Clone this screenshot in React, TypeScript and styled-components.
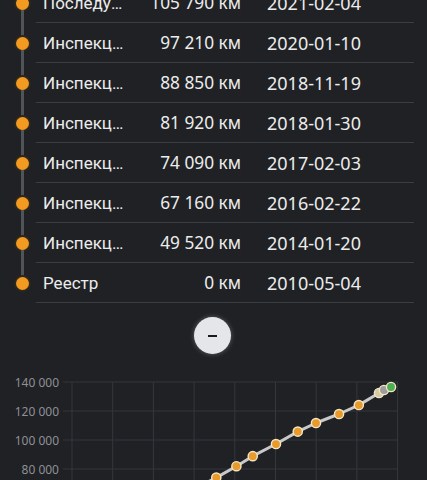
import React from 'react';
import styled, { createGlobalStyle } from 'styled-components';

const Global = createGlobalStyle`
  html, body { margin: 0; padding: 0; background: #1f2125; }
  body { font-family: Roboto, "Noto Sans", sans-serif; color: #ececec; overflow: hidden; }
`;

const Page = styled.div`
  width: 427px;
  height: 480px;
  overflow: hidden;
  background: #1f2125;
`;

const List = styled.ul`
  list-style: none;
  margin: -17px 0 0;
  padding: 0;
`;

const Row = styled.li`
  display: flex;
  height: 40px;
`;

const Rail = styled.div`
  width: 36px;
  padding-left: 9px;
  box-sizing: border-box;
  display: flex;
  flex-direction: column;
  align-items: center;
  flex: none;
`;

const Segment = styled.div<{ $hidden?: boolean }>`
  flex: 1;
  width: 3px;
  background: ${(p) => (p.$hidden ? 'transparent' : '#505358')};
`;

const Dot = styled.div`
  width: 13px;
  height: 13px;
  border-radius: 50%;
  background: #f39b20;
  box-shadow: 0 0 0 2px #2c2820;
  flex: none;
`;

const Content = styled.div`
  flex: 1;
  margin-right: 13px;
  padding-left: 7px;
  border-bottom: 1px solid #3a3d42;
  display: grid;
  grid-template-columns: 86px 112px auto;
  align-items: center;
`;

const Name = styled.span`
  font-family: Roboto, sans-serif;
  font-size: 17px;
  white-space: nowrap;
  overflow: hidden;
  text-overflow: ellipsis;
`;

const Mileage = styled.span`
  font-family: "Noto Sans", sans-serif;
  font-size: 17.3px;
  text-align: right;
  white-space: nowrap;
`;

const DateCell = styled.span`
  font-family: "Noto Sans", sans-serif;
  font-size: 18px;
  margin-left: 26px;
  white-space: nowrap;
`;

const ButtonRow = styled.div`
  display: flex;
  justify-content: center;
  padding: 14px 3px 0 0;
`;

const RoundButton = styled.button`
  width: 37px;
  height: 37px;
  border-radius: 50%;
  border: none;
  background: #e4e6ea;
  box-shadow: 0 0 5px rgba(255, 255, 255, 0.3);
  display: flex;
  align-items: center;
  justify-content: center;
  padding: 0;
  cursor: pointer;
`;

const Dash = styled.span`
  width: 9px;
  height: 2px;
  background: #1a1a1a;
`;

const ChartWrap = styled.div`
  margin-top: 7px;
`;

const rows = [
  { name: 'Последующая регистрация', km: '105 790 км', date: '2021-02-04' },
  { name: 'Инспекция', km: '97 210 км', date: '2020-01-10' },
  { name: 'Инспекция', km: '88 850 км', date: '2018-11-19' },
  { name: 'Инспекция', km: '81 920 км', date: '2018-01-30' },
  { name: 'Инспекция', km: '74 090 км', date: '2017-02-03' },
  { name: 'Инспекция', km: '67 160 км', date: '2016-02-22' },
  { name: 'Инспекция', km: '49 520 км', date: '2014-01-20' },
  { name: 'Реестр', km: '0 км', date: '2010-05-04' },
];

type Pt = { d: string; km: number; fill?: string };
const points: Pt[] = [
  { d: '2010-05-04', km: 0 },
  { d: '2014-01-20', km: 49520 },
  { d: '2016-02-22', km: 67160 },
  { d: '2017-02-03', km: 74090 },
  { d: '2018-01-30', km: 81920 },
  { d: '2018-11-19', km: 88850 },
  { d: '2020-01-10', km: 97210 },
  { d: '2021-02-04', km: 105790 },
  { d: '2021-12-28', km: 111700 },
  { d: '2023-02-15', km: 117900 },
  { d: '2024-02-05', km: 124100 },
  { d: '2025-02-01', km: 132400, fill: '#d6c9a6' },
  { d: '2025-05-01', km: 134500, fill: '#9c9c9c' },
  { d: '2025-09-05', km: 136550, fill: '#4caf50' },
];

const base = Date.UTC(2010, 0, 1);
const X = (d: string) => {
  const [y, m, dd] = d.split('-').map(Number);
  const yrs = (Date.UTC(y, m - 1, dd) - base) / (365.25 * 86400000);
  return 72 + yrs * 20.35;
};
const Y = (km: number) => 21 + ((140000 - km) * 29) / 20000;

const Chart = () => {
  const hLines = [0, 1, 2, 3, 4].map((i) => 21 + i * 29);
  const vLines = Array.from({ length: 9 }, (_, k) => 72 + k * 40.7);
  const labels = ['140 000', '120 000', '100 000', '80 000'];
  const path = points.map((p, i) => `${i ? 'L' : 'M'}${X(p.d).toFixed(1)},${Y(p.km).toFixed(1)}`).join(' ');
  return (
    <svg width={427} height={160} viewBox="0 0 427 160" style={{ display: 'block' }}>
      {hLines.map((y) => (
        <line key={'h' + y} x1={63} x2={398} y1={y} y2={y} stroke="#34373c" strokeWidth={1} />
      ))}
      {vLines.map((x) => (
        <line key={'v' + x} x1={x} x2={x} y1={21} y2={160} stroke="#34373c" strokeWidth={1} />
      ))}
      {labels.map((l, i) => (
        <text
          key={l}
          x={59}
          y={21 + i * 29}
          textAnchor="end"
          dominantBaseline="central"
          fill="#8e9095"
          fontSize={12}
          fontFamily='"Noto Sans", sans-serif'
        >
          {l}
        </text>
      ))}
      <path d={path} fill="none" stroke="#c8c8c8" strokeWidth={3} strokeLinejoin="round" />
      {points.map((p) => (
        <circle
          key={p.d}
          cx={X(p.d)}
          cy={Y(p.km)}
          r={4.6}
          fill={p.fill ?? '#e89a2c'}
          stroke="#f3e6c4"
          strokeWidth={1.4}
        />
      ))}
    </svg>
  );
};

export default function App() {
  return (
    <Page>
      <Global />
      <List>
        {rows.map((r, i) => (
          <Row key={i}>
            <Rail>
              <Segment />
              <Dot />
              <Segment $hidden={i === rows.length - 1} />
            </Rail>
            <Content>
              <Name>{r.name}</Name>
              <Mileage>{r.km}</Mileage>
              <DateCell>{r.date}</DateCell>
            </Content>
          </Row>
        ))}
      </List>
      <ButtonRow>
        <RoundButton aria-label="collapse">
          <Dash />
        </RoundButton>
      </ButtonRow>
      <ChartWrap>
        <Chart />
      </ChartWrap>
    </Page>
  );
}
